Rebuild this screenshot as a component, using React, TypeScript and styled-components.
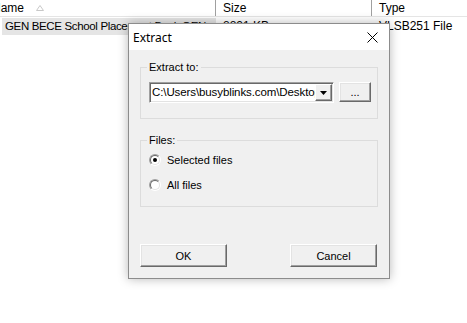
import React from 'react';
import styled, { createGlobalStyle } from 'styled-components';

const GlobalStyle = createGlobalStyle`
  html, body {
    margin: 0;
    padding: 0;
    background: #ffffff;
  }
  body {
    width: 467px;
    height: 323px;
    overflow: hidden;
    font-family: "Liberation Sans", Arial, sans-serif;
    font-size: 11px;
    color: #000;
  }
`;

const Screen = styled.div`
  position: relative;
  width: 467px;
  height: 323px;
  overflow: hidden;
  background: #fff;
`;

const ListView = styled.div`
  display: flex;
  flex-direction: column;
`;

const HeaderRow = styled.div`
  display: grid;
  grid-template-columns: 216px 156px 1fr;
  height: 16px;
  border-bottom: 1px solid #e5e5e5;
`;

const HeaderCell = styled.div<{ $first?: boolean }>`
  display: flex;
  align-items: center;
  gap: 12px;
  padding-left: ${(p) => (p.$first ? '0' : '7px')};
  margin-left: ${(p) => (p.$first ? '-8px' : '0')};
  border-right: 1px solid #a0a0a0;
  box-shadow: inset -1px 0 0 #fff;
  font-size: 12px;
  line-height: 16px;
  color: #000;
  white-space: nowrap;
  overflow: hidden;

  &:last-child {
    border-right: none;
  }
`;

const DataRow = styled.div`
  display: grid;
  grid-template-columns: 216px 156px 1fr;
  height: 17px;
  padding-top: 1px;
`;

const DataCell = styled.div<{ $selected?: boolean }>`
  padding-left: ${(p) => (p.$selected ? '3px' : '7px')};
  margin-left: ${(p) => (p.$selected ? '2px' : '0')};
  background: ${(p) => (p.$selected ? '#e5e5e5' : 'transparent')};
  font-size: ${(p) => (p.$selected ? '11.5px' : '12px')};
  letter-spacing: ${(p) => (p.$selected ? '-0.35px' : '0')};
  line-height: 17px;
  white-space: nowrap;
  overflow: hidden;
`;

const Dialog = styled.div`
  position: absolute;
  left: 128px;
  top: 23px;
  width: 260px;
  height: 254px;
  border: 1px solid #8c8c8c;
  background: #f0f0f0;
  box-shadow: 0 0 10px rgba(0, 0, 0, 0.28);
  display: flex;
  flex-direction: column;
`;

const TitleBar = styled.div`
  height: 26px;
  background: #ffffff;
  display: flex;
  align-items: center;
  justify-content: space-between;
  padding: 0 11px 0 4px;
  font-family: "Noto Sans", "Open Sans", sans-serif;
  font-size: 12px;
`;

const TitleText = styled.span`
  padding-top: 1px;
`;

const Body = styled.div`
  flex: 1;
  display: flex;
  flex-direction: column;
  padding: 11px 11px 0 11px;
`;

const Group = styled.fieldset<{ $padTop: number; $padBottom: number }>`
  margin: 0;
  padding: ${(p) => p.$padTop}px 6px ${(p) => p.$padBottom}px 8px;
  border: 1px solid #dcdcdc;
  min-width: 0;
`;

const Legend = styled.legend`
  padding: 0 2px;
  margin-left: -2px;
  font-size: 11px;
  line-height: 13px;
  color: #000;
`;

const PathRow = styled.div`
  display: flex;
  gap: 5px;
  height: 21px;
`;

const Combo = styled.div`
  width: 180px;
  height: 17px;
  display: flex;
  background: #fff;
  border: 1px solid;
  border-color: #a0a0a0 #fff #fff #a0a0a0;
  box-shadow: inset 1px 1px 0 #696969, inset -1px -1px 0 #e3e3e3;
  padding: 1px 1px 1px 2px;
`;

const ComboText = styled.div`
  flex: 1;
  overflow: hidden;
  white-space: nowrap;
  font-size: 11.5px;
  letter-spacing: -0.1px;
  line-height: 17px;
`;

const DropButton = styled.div`
  width: 15px;
  height: 15px;
  background: #f0f0f0;
  border: 1px solid;
  border-color: #fff #696969 #696969 #fff;
  box-shadow: inset -1px -1px 0 #a0a0a0;
  display: flex;
  align-items: center;
  justify-content: center;
`;

const ClassicButton = styled.button<{ $w: number; $h: number }>`
  width: ${(p) => p.$w}px;
  height: ${(p) => p.$h}px;
  padding: 0;
  margin: 0;
  background: #f0f0f0;
  border: 1px solid;
  border-color: #fff #696969 #696969 #fff;
  box-shadow: inset -1px -1px 0 #a0a0a0, inset 1px 1px 0 #e3e3e3;
  font-family: "Liberation Sans", Arial, sans-serif;
  font-size: 11px;
  color: #000;
`;

const RadioList = styled.div`
  display: flex;
  flex-direction: column;
  gap: 9px;
`;

const RadioRow = styled.label`
  display: flex;
  align-items: center;
  gap: 6px;
  height: 16px;
  font-size: 11px;
`;

const RadioOuter = styled.span`
  width: 10px;
  height: 10px;
  border-radius: 50%;
  border: 1px solid;
  border-color: #a0a0a0 #fff #fff #a0a0a0;
  display: flex;
  align-items: center;
  justify-content: center;
`;

const RadioInner = styled.span<{ $checked?: boolean }>`
  width: 8px;
  height: 8px;
  border-radius: 50%;
  border: 1px solid;
  border-color: #696969 #e3e3e3 #e3e3e3 #696969;
  background: #fff;
  display: flex;
  align-items: center;
  justify-content: center;

  &::after {
    content: '';
    display: ${(p) => (p.$checked ? 'block' : 'none')};
    width: 4px;
    height: 4px;
    border-radius: 50%;
    background: #000;
  }
`;

const ButtonRow = styled.div`
  display: flex;
  justify-content: space-between;
  margin-top: 37px;
  padding-right: 1px;
`;

const Radio: React.FC<{ label: string; checked?: boolean }> = ({ label, checked }) => (
  <RadioRow>
    <RadioOuter>
      <RadioInner $checked={checked} />
    </RadioOuter>
    {label}
  </RadioRow>
);

const App: React.FC = () => {
  return (
    <Screen>
      <GlobalStyle />
      <ListView>
        <HeaderRow>
          <HeaderCell $first>
            <span>Name</span>
            <svg width="8" height="6" viewBox="0 0 8 6">
              <path d="M0.5 5.5 L4 0.5 L7.5 5.5 Z" fill="none" stroke="#c8c8c8" />
            </svg>
          </HeaderCell>
          <HeaderCell>Size</HeaderCell>
          <HeaderCell>Type</HeaderCell>
        </HeaderRow>
        <DataRow>
          <DataCell $selected>GEN BECE School Placement Book.GEN</DataCell>
          <DataCell>8821 KB</DataCell>
          <DataCell>VLSB251 File</DataCell>
        </DataRow>
      </ListView>

      <Dialog>
        <TitleBar>
          <TitleText>Extract</TitleText>
          <svg width="11" height="11" viewBox="0 0 11 11">
            <path d="M0.5 0.5 L10.5 10.5 M10.5 0.5 L0.5 10.5" stroke="#000" strokeWidth="1" />
          </svg>
        </TitleBar>
        <Body>
          <Group $padTop={8} $padBottom={15}>
            <Legend>Extract to:</Legend>
            <PathRow>
              <Combo>
                <ComboText>C:\Users\busyblinks.com\Desktop</ComboText>
                <DropButton>
                  <svg width="7" height="4" viewBox="0 0 7 4">
                    <path d="M0 0 H7 L3.5 4 Z" fill="#000" />
                  </svg>
                </DropButton>
              </Combo>
              <ClassicButton $w={33} $h={20}>...</ClassicButton>
            </PathRow>
          </Group>
          <Group $padTop={5} $padBottom={13} style={{ marginTop: 15 }}>
            <Legend>Files:</Legend>
            <RadioList>
              <Radio label="Selected files" checked />
              <Radio label="All files" />
            </RadioList>
          </Group>
          <ButtonRow>
            <ClassicButton $w={87} $h={23}>OK</ClassicButton>
            <ClassicButton $w={87} $h={23}>Cancel</ClassicButton>
          </ButtonRow>
        </Body>
      </Dialog>
    </Screen>
  );
};

export default App;
